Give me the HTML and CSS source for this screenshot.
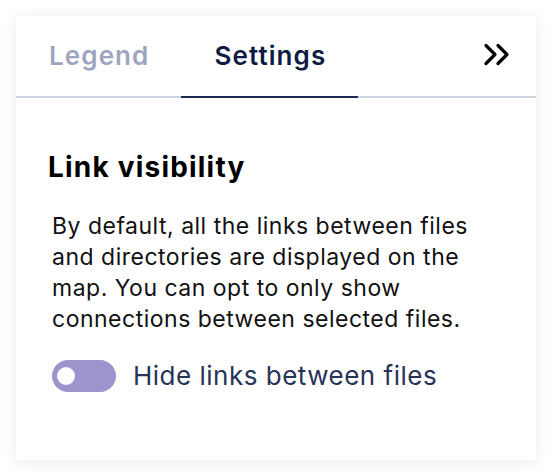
FILE: index.html
```html
<!DOCTYPE html>
<html lang="en">
<head>
<meta charset="utf-8">
<title>Settings</title>
<link rel="stylesheet" href="styles.css">
</head>
<body>
<div class="panel">
  <div class="tabs">
    <div class="tab">Legend</div>
    <div class="tab active">Settings</div>
    <button class="collapse" aria-label="Collapse">
      <svg width="28" height="24" viewBox="0 0 28 24" fill="none" stroke="#000" stroke-width="3.2" stroke-linecap="round" stroke-linejoin="round">
        <path d="M3 2.5 L12 11.5 L3 20.5"/>
        <path d="M15 2.5 L24 11.5 L15 20.5"/>
      </svg>
    </button>
  </div>
  <div class="content">
    <h2 class="heading">Link visibility</h2>
    <div class="section">
      <p class="desc">By default, all the links between files and directories are displayed on the map. You can opt to only show connections between selected files.</p>
      <label class="option">
        <span class="switch"><span class="knob"></span></span>
        <span class="label">Hide links between files</span>
      </label>
    </div>
  </div>
</div>
</body>
</html>
```

FILE: styles.css
```css
* { box-sizing: border-box; }
html, body { margin: 0; padding: 0; background: #fff; }
body {
  padding: 16px;
  font-family: Inter, "Noto Sans", sans-serif;
}
.panel {
  width: 520px;
  height: 444px;
  background: #fff;
  box-shadow: 0 2px 14px rgba(0, 0, 0, 0.09);
}
.tabs {
  display: flex;
  align-items: stretch;
  height: 82px;
  border-bottom: 2px solid #cfd3e0;
}
.tab {
  display: flex;
  align-items: center;
  justify-content: center;
  padding: 0 32px 2px 33px;
  font-size: 26px;
  font-weight: 600;
  letter-spacing: 1.1px;
  color: #9ea5c0;
  margin-bottom: -2px;
  border-bottom: 2px solid transparent;
}
.tab.active {
  color: #0f1b45;
  border-bottom-color: #1f2a4f;
}
.collapse {
  margin-left: auto;
  align-self: center;
  margin-top: -2px;
  margin-right: 25px;
  background: none;
  border: 0;
  padding: 0;
  display: flex;
}
.content {
  padding: 52px 32px 0 32px;
}
.heading {
  margin: 0;
  font-size: 28px;
  font-weight: 700;
  letter-spacing: 1.2px;
  color: #000;
  line-height: 35px;
}
.section {
  padding: 0 16px 0 4px;
}
.desc {
  margin: 26px 0 0;
  font-size: 23px;
  line-height: 31px;
  letter-spacing: 0.5px;
  color: #111;
}
.option {
  display: flex;
  align-items: center;
  gap: 17px;
  margin-top: 25px;
}
.switch {
  display: flex;
  align-items: center;
  flex: none;
  width: 64px;
  height: 32px;
  border-radius: 16px;
  background: #9f93cc;
  padding-left: 5px;
}
.knob {
  width: 18px;
  height: 18px;
  border-radius: 50%;
  background: #fff;
}
.label {
  font-size: 26px;
  letter-spacing: 0.5px;
  line-height: 32px;
  color: #283357;
}
```
